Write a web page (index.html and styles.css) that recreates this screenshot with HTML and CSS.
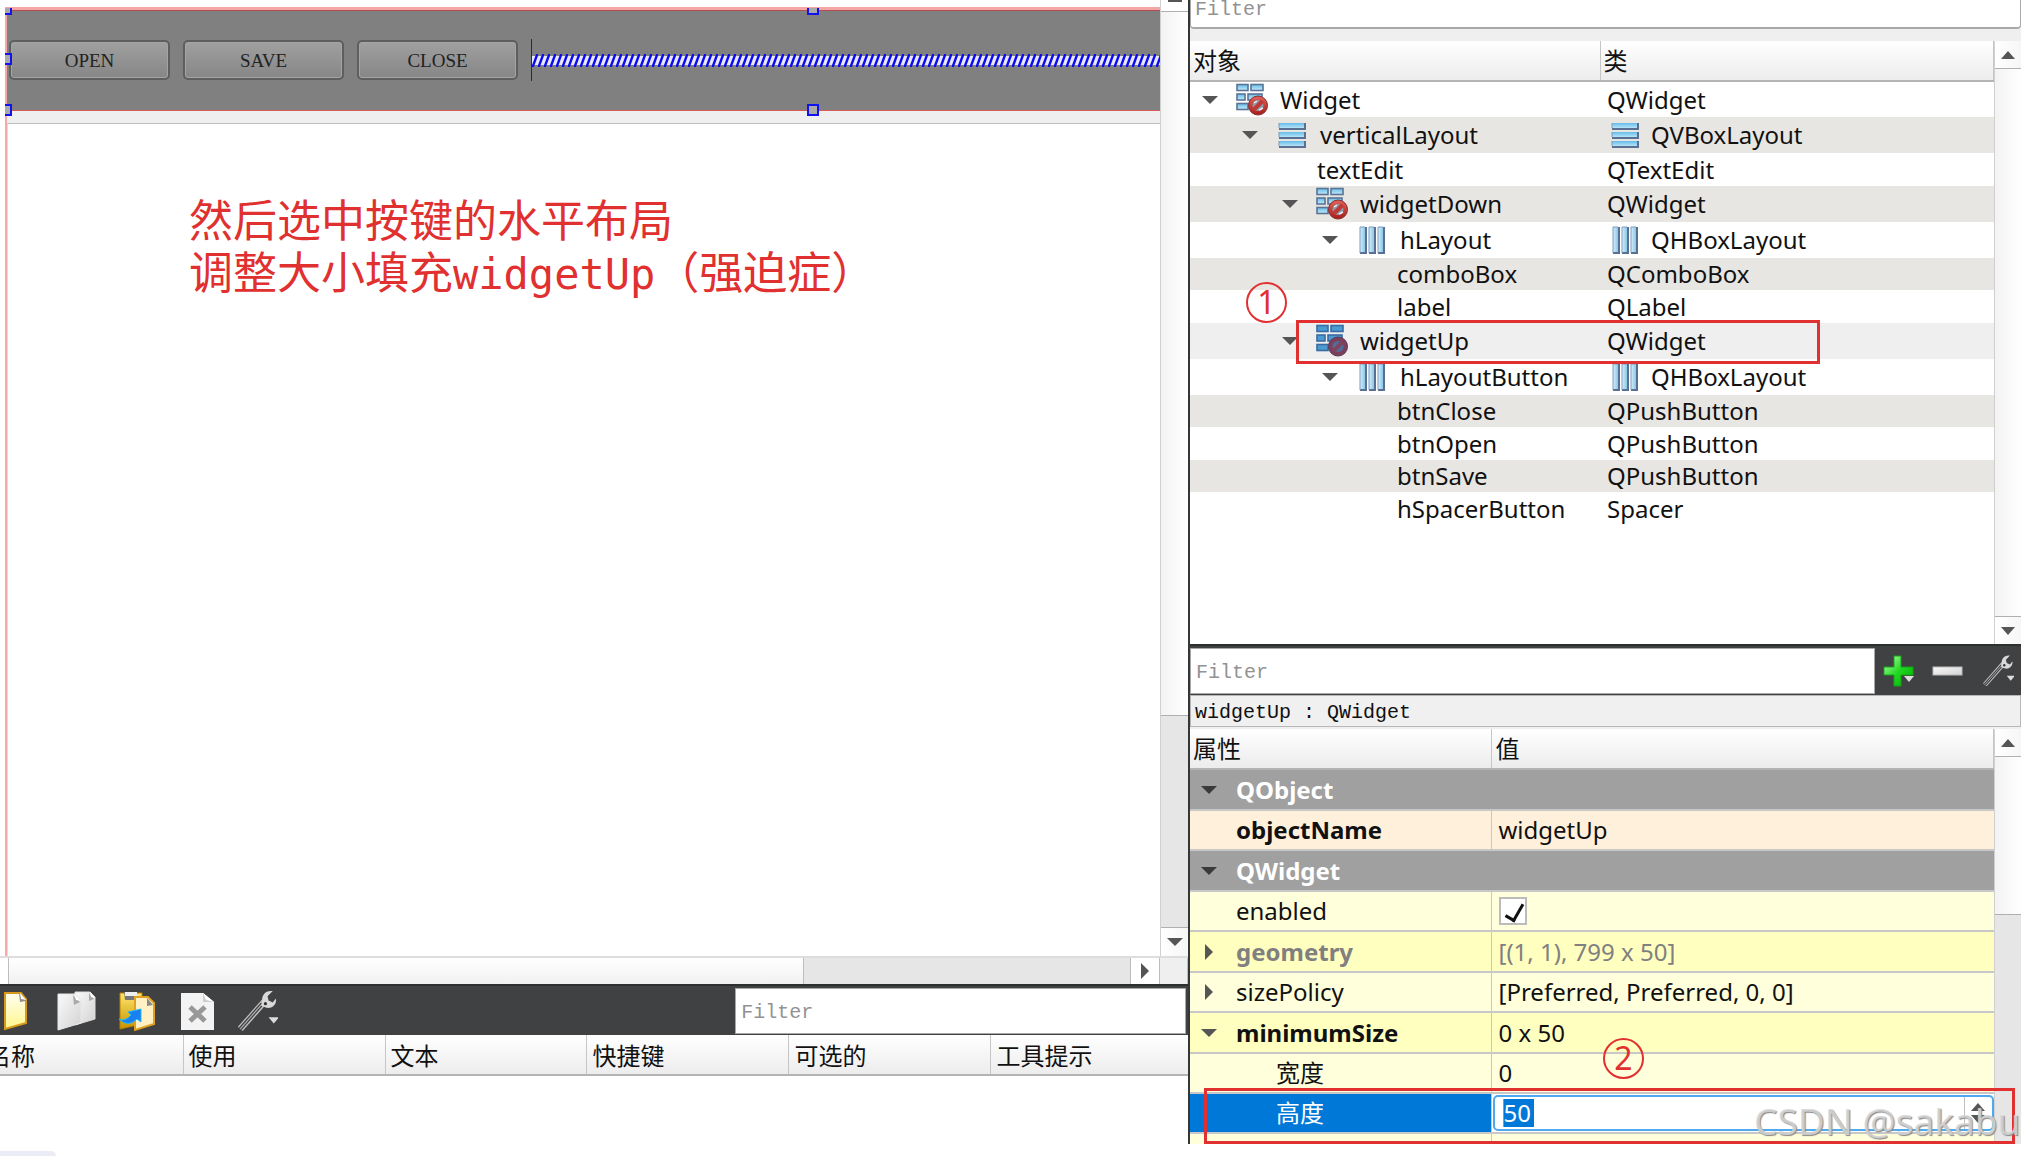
FILE: index.html
```html
<!DOCTYPE html>
<html lang="zh-CN">
<head>
<meta charset="utf-8">
<title>Qt Designer</title>
<link rel="stylesheet" href="styles.css">
</head>
<body>
<svg class="defs" width="0" height="0" aria-hidden="true">
  <defs>
    <linearGradient id="gBlue" x1="0" y1="0" x2="0" y2="1"><stop offset="0" stop-color="#63bbe8"/><stop offset="1" stop-color="#c9ecfb"/></linearGradient>
    <linearGradient id="gBar" x1="0" y1="0" x2="1" y2="0"><stop offset="0" stop-color="#d5effb"/><stop offset="1" stop-color="#7cc0e2"/></linearGradient>
    <linearGradient id="gRed" x1="0" y1="0" x2="0" y2="1"><stop offset="0" stop-color="#e0655c"/><stop offset="1" stop-color="#a81c18"/></linearGradient>
    <linearGradient id="gGreen" x1="0" y1="0" x2="1" y2="1"><stop offset="0" stop-color="#c8ffc0"/><stop offset=".5" stop-color="#22d822"/><stop offset="1" stop-color="#00a800"/></linearGradient>
    <linearGradient id="gPage" x1="0" y1="0" x2="0" y2="1"><stop offset="0" stop-color="#fffdf0"/><stop offset="1" stop-color="#fff78c"/></linearGradient>
    <linearGradient id="gGray" x1="0" y1="0" x2="1" y2="1"><stop offset="0" stop-color="#fafafa"/><stop offset="1" stop-color="#d2d2d2"/></linearGradient>
    <linearGradient id="gGold" x1="0" y1="0" x2="0" y2="1"><stop offset="0" stop-color="#ffe66a"/><stop offset="1" stop-color="#c79300"/></linearGradient>
    <pattern id="spring" width="6" height="13" patternUnits="userSpaceOnUse">
      <rect width="6" height="13" fill="#808080"/>
      <rect y="2" width="6" height="9" fill="#e8e8ff"/>
      <path d="M-1 12 H1 L5 1 H7" fill="none" stroke="#0b0bf0" stroke-width="2.400"/>
    </pattern>
    <symbol id="i-widget" viewBox="0 0 34 34">
      <g fill="url(#gBlue)" stroke="#5b7496" stroke-width="1.6">
        <rect x="3" y="1.500" width="11" height="6"/><rect x="17" y="1.500" width="12" height="6"/>
        <rect x="3" y="11" width="8" height="6"/><rect x="14" y="11" width="14" height="6"/>
        <rect x="3" y="20.500" width="11" height="6"/>
      </g>
      <circle cx="24" cy="22.500" r="9.500" fill="url(#gRed)" stroke="#8c2a2a"/>
      <circle cx="24" cy="22.500" r="5.500" fill="#8e99a8"/>
      <path d="M19.500 27 L28.500 18" stroke="#c03a34" stroke-width="4"/>
      <path d="M20 20l3-2M25 27l4-2" stroke="#e8eef4" stroke-width="1.500"/>
    </symbol>
    <symbol id="i-widget-sel" viewBox="0 0 34 34">
      <g fill="#4a9bd2" stroke="#3a6ba3" stroke-width="1.6">
        <rect x="3" y="1.500" width="11" height="6"/><rect x="17" y="1.500" width="12" height="6"/>
        <rect x="3" y="11" width="8" height="6"/><rect x="14" y="11" width="14" height="6"/>
        <rect x="3" y="20.500" width="11" height="6"/>
      </g>
      <circle cx="24" cy="22.500" r="9.500" fill="#7c3f5c" stroke="#5c3558"/>
      <circle cx="24" cy="22.500" r="5.500" fill="#4c6f9d"/>
      <path d="M19.500 27 L28.500 18" stroke="#84435c" stroke-width="4"/>
    </symbol>
    <symbol id="i-vbox" viewBox="0 0 34 34">
      <g fill="url(#gBlue)"><rect x="5" y="5" width="26" height="6"/><rect x="5" y="14" width="26" height="6"/><rect x="5" y="23" width="26" height="6"/></g>
      <path d="M5 11h26V5M5 20h26v-6M5 29h26v-6" fill="none" stroke="#5b6f92" stroke-width="2"/>
      <path d="M5 10V5M5 19v-5M5 28v-5" stroke="#7f9cbc"/>
    </symbol>
    <symbol id="i-hbox" viewBox="0 0 34 34">
      <g fill="url(#gBar)"><rect x="6" y="4" width="6" height="26"/><rect x="15" y="4" width="6" height="26"/><rect x="24" y="4" width="6" height="26"/></g>
      <path d="M6 30h6V4M15 30h6V4M24 30h6V4" fill="none" stroke="#5b6f92" stroke-width="2"/>
      <path d="M6 30V4h5M15 30V4h5M24 30V4h5" fill="none" stroke="#7f9cbc"/>
    </symbol>
    <symbol id="i-wrench" viewBox="0 0 42 42">
      <path d="M6 38 L29 12" stroke="#c4c4c4" stroke-width="6"/>
      <path d="M6 38 L27 14" stroke="#404142" stroke-width="3.500"/>
      <path d="M6 38 L27 14" stroke="#b8b8b8" stroke-width="1"/>
      <path d="M37 2 C30 1 26 6 27 12 L26 16 L31 18 C37 19 41 14 40 9 L37 13 L33 11 L32 7 Z" fill="#d9d9d9"/>
      <circle cx="30" cy="14" r="1.500" fill="#333"/>
      <path d="M33 27h10l-5 6z" fill="#ddd"/>
    </symbol>
  </defs>
</svg>

<main class="designer">
  <section class="editor">
    <div class="form-area">
      <div class="canvas">
        <div class="form">
          <div class="widget-up">
            <button type="button" class="push">OPEN</button>
            <button type="button" class="push">SAVE</button>
            <button type="button" class="push">CLOSE</button>
            <div class="spacer"><svg width="100%" height="13" aria-hidden="true"><rect width="100%" height="13" fill="url(#spring)"/></svg></div>
            <i class="grip g-tl"></i><i class="grip g-ml"></i><i class="grip g-bl"></i>
            <i class="grip g-tc"></i><i class="grip g-bc"></i>
          </div>
          <div class="text-edit">
            <p class="note">然后选中按键的水平布局<br>调整大小填充<span class="mono">widgetUp</span>（强迫症）</p>
          </div>
        </div>
      </div>
      <div class="vscroll main-scroll">
        <span class="cap-top"></span>
        <span class="thumb"></span>
        <span class="trough"></span>
        <span class="arrow-box"><i class="tri down"></i></span>
      </div>
    </div>
    <div class="hscroll">
      <span class="h-start"></span><span class="h-thumb"></span><span class="h-trough"></span>
      <span class="h-arrow"><i class="tri right"></i></span><span class="h-corner"></span>
    </div>
    <div class="toolbar">
      <div class="tools">
        <button type="button" class="tool" aria-label="新建"><svg width="38" height="42" viewBox="0 0 38 42"><path d="M5 3H21L26 9V33L5 39Z" fill="url(#gPage)" stroke="#d99a1b" stroke-width="2"/><path d="M19 3l1 9 6-1z" fill="#8f8f8f"/><path d="M20 3l6 7-5-1z" fill="#fff"/></svg></button>
        <button type="button" class="tool" aria-label="复制"><svg width="40" height="42" viewBox="0 0 40 42"><path d="M19 2H34L39 7V29L19 35Z" fill="url(#gGray)" stroke="#ddd"/><path d="M2 4H19L25 10V33L2 40Z" fill="url(#gGray)" stroke="#e8e8e8"/><path d="M17 5l1 10 6-3zM33 3l0 8 5-2z" fill="#aaa"/><path d="M18 4l7 7-5-1zM34 2l5 6-4-1z" fill="#fff"/></svg></button>
        <button type="button" class="tool" aria-label="粘贴"><svg width="46" height="42" viewBox="0 0 46 42"><path d="M6 3H28V34L6 39Z" fill="url(#gGold)" stroke="#b98000"/><path d="M10 2h13l-2 8H11z" fill="#777"/><path d="M11 2h12v4H11z" fill="#eee"/><path d="M21 7H34L40 13V34L21 40Z" fill="#fff1c4" stroke="#e0a020" stroke-width="2"/><path d="M33 8l0 8 6-1z" fill="#888"/><path d="M5 29q6 3 12-4l-3-3 13-3v13l-4-3q-9 9-18 0z" fill="#1880f0" stroke="#2bb8f0"/></svg></button>
        <button type="button" class="tool" aria-label="删除"><svg width="38" height="42" viewBox="0 0 38 42"><path d="M3 3H25L36 12V40H3Z" fill="#f3f3f3"/><path d="M25 3v9h11z" fill="#ccc"/><path d="M25 3l11 9-8-2z" fill="#fff"/><path d="M12 17l15 14M27 17L12 31" stroke="#989898" stroke-width="5"/></svg></button>
        <button type="button" class="tool" aria-label="配置"><svg width="44" height="44"><use href="#i-wrench"/></svg></button>
      </div>
      <input class="filter action-filter" type="text" placeholder="Filter" aria-label="Filter actions">
    </div>
    <table class="actions">
      <thead><tr><th class="cut">名称</th><th>使用</th><th>文本</th><th>快捷键</th><th>可选的</th><th class="last">工具提示</th></tr></thead>
    </table>
    <div class="actions-body"><span class="hint"></span></div>
  </section>

  <aside class="side">
    <section class="inspector">
      <input class="filter top-filter" type="text" placeholder="Filter" aria-label="Filter objects">
      <div class="scroll-row">
        <div class="table-box">
          <table class="tree">
            <thead><tr><th class="c-object">对象</th><th>类</th></tr></thead>
            <tbody>
              <tr class="tall"><td class="l0"><div class="cell"><i class="tri down"></i><svg class="ico"><use href="#i-widget"/></svg>Widget</div></td><td>QWidget</td></tr>
              <tr class="tall alt"><td class="l1"><div class="cell"><i class="tri down"></i><svg class="ico"><use href="#i-vbox"/></svg>verticalLayout</div></td><td><div class="cell"><svg class="ico"><use href="#i-vbox"/></svg>QVBoxLayout</div></td></tr>
              <tr><td class="l2 leaf">textEdit</td><td>QTextEdit</td></tr>
              <tr class="tall alt"><td class="l2"><div class="cell"><i class="tri down"></i><svg class="ico"><use href="#i-widget"/></svg>widgetDown</div></td><td>QWidget</td></tr>
              <tr class="tall"><td class="l3"><div class="cell"><i class="tri down"></i><svg class="ico"><use href="#i-hbox"/></svg>hLayout</div></td><td><div class="cell"><svg class="ico"><use href="#i-hbox"/></svg>QHBoxLayout</div></td></tr>
              <tr class="alt"><td class="l4 leaf">comboBox</td><td>QComboBox</td></tr>
              <tr><td class="l4 leaf">label</td><td>QLabel</td></tr>
              <tr class="tall current"><td class="l2"><div class="cell"><i class="tri down"></i><svg class="ico"><use href="#i-widget-sel"/></svg>widgetUp</div></td><td>QWidget</td></tr>
              <tr class="tall"><td class="l3"><div class="cell"><i class="tri down"></i><svg class="ico"><use href="#i-hbox"/></svg>hLayoutButton</div></td><td><div class="cell"><svg class="ico"><use href="#i-hbox"/></svg>QHBoxLayout</div></td></tr>
              <tr class="alt"><td class="l4 leaf">btnClose</td><td>QPushButton</td></tr>
              <tr><td class="l4 leaf">btnOpen</td><td>QPushButton</td></tr>
              <tr class="alt"><td class="l4 leaf">btnSave</td><td>QPushButton</td></tr>
              <tr><td class="l4 leaf">hSpacerButton</td><td>Spacer</td></tr>
            </tbody>
          </table>
          <span class="mark mark-one"></span>
          <span class="badge badge-one">1</span>
        </div>
        <div class="vscroll side-scroll">
          <span class="arrow-box"><i class="tri up small"></i></span>
          <span class="thumb"></span>
          <span class="arrow-box"><i class="tri down small"></i></span>
        </div>
      </div>
    </section>

    <section class="properties">
      <div class="prop-bar">
        <input class="filter prop-filter" type="text" placeholder="Filter" aria-label="Filter properties">
        <div class="prop-tools">
          <button type="button" class="tool" aria-label="添加"><svg width="34" height="34" viewBox="0 0 34 34"><path d="M12 2h7v11h12v8H19v11h-7V21H2v-8h10z" fill="url(#gGreen)" stroke="#13a513"/><path d="M22 22h10l-5 6z" fill="#ddd"/></svg></button>
          <button type="button" class="tool" aria-label="移除"><svg width="34" height="34" viewBox="0 0 34 34"><rect x="2" y="13" width="29" height="8" fill="url(#gGray)" stroke="#bbb"/></svg></button>
          <button type="button" class="tool" aria-label="配置"><svg width="34" height="36"><use href="#i-wrench"/></svg></button>
        </div>
      </div>
      <div class="prop-title">widgetUp : QWidget</div>
      <div class="scroll-row">
        <div class="table-box">
          <table class="props">
            <thead><tr><th class="c-prop">属性</th><th>值</th></tr></thead>
            <tbody>
              <tr class="group"><td colspan="2"><div class="cell"><i class="tri down"></i><b>QObject</b></div></td></tr>
              <tr class="peach"><td class="name"><b>objectName</b></td><td>widgetUp</td></tr>
              <tr class="group"><td colspan="2"><div class="cell"><i class="tri down"></i><b>QWidget</b></div></td></tr>
              <tr class="pale"><td class="name"><label for="enabled">enabled</label></td><td><input id="enabled" class="check" type="checkbox" checked></td></tr>
              <tr class="deep dim"><td><div class="cell"><i class="tri right"></i><b>geometry</b></div></td><td>[(1, 1), 799 x 50]</td></tr>
              <tr class="pale"><td><div class="cell"><i class="tri right"></i>sizePolicy</div></td><td>[Preferred, Preferred, 0, 0]</td></tr>
              <tr class="deep"><td><div class="cell"><i class="tri down"></i><b>minimumSize</b></div></td><td>0 x 50</td></tr>
              <tr class="pale"><td class="name sub">宽度</td><td>0</td></tr>
              <tr class="editing"><td class="name sub"><label for="minh">高度</label></td><td class="spin-cell"><div class="spin"><input id="minh" class="spin-input" type="text" value="50"><span class="steps"><i class="tri up small"></i><i class="tri down small"></i></span></div></td></tr>
              <tr class="pale"><td></td><td></td></tr>
            </tbody>
          </table>
          <span class="badge badge-two">2</span>
        </div>
        <div class="vscroll prop-scroll">
          <span class="arrow-box"><i class="tri up small"></i></span>
          <span class="thumb"></span>
          <span class="trough"></span>
        </div>
      </div>
      <span class="mark mark-two"></span>
    </section>
    <div class="watermark">CSDN @sakabu</div>
  </aside>
</main>
</body>
</html>
```
FILE: styles.css
```css
* { box-sizing: border-box; }
body {
  margin: 0;
  background: #fff;
  color: #111;
  font: 24px/32px "Noto Sans", "Noto Sans CJK SC", sans-serif;
  overflow: hidden;
}
.defs { position: absolute; }
input, button { font: inherit; margin: 0; }
table { border-collapse: collapse; table-layout: fixed; width: 100%; }
td, th { padding: 0; text-align: left; font-weight: 400; white-space: nowrap; }

.designer {
  display: grid;
  grid-template-columns: minmax(0, 1188fr) minmax(0, 833fr);
  height: 100vh;
  padding-right: 11px;
}

/* triangles */
.tri { display: inline-block; flex: none; width: 0; height: 0; border: 8px solid transparent; }
.tri.down { border-top-color: #555; border-bottom-width: 0; }
.tri.up { border-bottom-color: #555; border-top-width: 0; }
.tri.right { border-left-color: #555; border-right-width: 0; }
.tri.small { border-left-width: 7px; border-right-width: 7px; }

/* form editor */
.editor { display: flex; flex-direction: column; min-width: 0; }
.form-area { display: flex; flex: 1; min-height: 0; }
.canvas { flex: 1; min-width: 0; padding: 7px 0 0 5px; display: flex; background: #fff; }
.form {
  flex: 1;
  min-width: 0;
  display: flex;
  flex-direction: column;
  gap: 12px;
  background: #efefef;
  border-left: 2px solid #f6a9a9;
}
.widget-up {
  position: relative;
  display: flex;
  align-items: center;
  gap: 13px;
  height: 104px;
  padding-left: 2px;
  background: #808080;
  border-top: 3px solid #f4a6a6;
  border-bottom: 1px solid #d85c5c;
  box-shadow: inset 0 1px #b05050;
}
.push {
  width: 161px;
  height: 40px;
  padding: 2px 0 0;
  border: 2px solid #5e5e5e;
  border-radius: 5px;
  background: linear-gradient(#a0a0a0, #868686);
  box-shadow: inset 0 0 0 1px #a4a4a4;
  color: #222;
  font: 19px/32px "Liberation Serif", serif;
}
.spacer {
  flex: 1;
  min-width: 0;
  height: 42px;
  display: flex;
  align-items: center;
  border-left: 1px solid #1414e0;
}
.grip { position: absolute; width: 12px; height: 12px; border: 2px solid #1212f0; background: #a9a9a9; }
.g-tl, .g-ml, .g-bl { left: -2px; width: 7px; border-left: 0; }
.g-tl, .g-tc { top: -2px; height: 7px; border-top: 0; }
.g-ml { top: 43px; }
.g-bl, .g-bc { bottom: -6px; }
.g-tc, .g-bc { left: 800px; }
.text-edit { flex: 1; border-top: 1px solid #bdbdbd; border-left: 1px solid #ddd; background: #fff; }
.note {
  margin: 68px 0 0 181px;
  color: #e03030;
  font: 44px/52px "Noto Sans CJK SC", sans-serif;
  white-space: nowrap;
}
.mono { font: 42px/52px "DejaVu Sans Mono", monospace; }

/* scroll bars */
.vscroll { display: flex; flex-direction: column; flex: none; width: 28px; border-left: 1px solid #d0d0d0; }
.thumb { background: linear-gradient(90deg, #f3f3f3, #fff); }
.trough { background: #e6e6e6; }
.arrow-box { display: flex; align-items: center; justify-content: center; height: 28px; flex: none; background: linear-gradient(90deg, #fff, #f6f6f6); }
.cap-top { height: 12px; border-bottom: 1px solid #b0b0b0; background: #fff linear-gradient(#555, #555) center top / 14px 2px no-repeat; }
.main-scroll .thumb { flex: 705; border-bottom: 1px solid #b0b0b0; }
.main-scroll .trough { flex: 211; border-bottom: 1px solid #b0b0b0; }
.hscroll { display: flex; height: 28px; border-top: 2px solid #ddd; background: #fff; }
.hscroll span { border-right: 1px solid #bdbdbd; }
.h-start { width: 9px; }
.h-thumb { flex: 795; background: linear-gradient(#fff, #f1f1f1); }
.h-trough { flex: 327; background: #e6e6e6; }
.h-arrow { width: 29px; display: flex; align-items: center; justify-content: center; }
.h-corner { width: 28px; background: #efefef; }

/* action editor */
.toolbar { display: flex; align-items: center; justify-content: space-between; height: 51px; padding-right: 2px; background: #404142; border-top: 2px solid #2e3030; }
.tools { display: flex; align-items: center; gap: 18px; }
.tool { display: flex; padding: 0; border: 0; background: none; flex: none; }
.filter {
  display: block;
  min-width: 0;
  border: 1px solid #a8a8a8;
  background: #fff;
  padding: 4px 5px 0;
  font: 20px/24px "Liberation Mono", monospace;
  outline: 0;
}
.filter::placeholder { color: #929292; opacity: 1; }
.action-filter { width: 38%; height: 46px; }
th { background: linear-gradient(#fff, #ececec); border-right: 1px solid #c6c6c6; border-bottom: 2px solid #b4b4b4; }
.actions { flex: none; }
.actions th { height: 40px; padding: 2px 0 0 5px; width: 17%; }
.actions .cut { width: 183px; padding-left: 0; text-indent: -13px; overflow: hidden; }
.actions .last { width: 197px; border-right: 0; }
.actions-body { height: 80px; display: flex; align-items: flex-end; }
.hint { width: 56px; height: 5px; border-radius: 0 8px 0 0; background: #ececf6; }

/* right-hand docks */
.side { position: relative; display: flex; flex-direction: column; min-width: 0; min-height: 0; margin-bottom: 12px; border-left: 2px solid #343637; background: #efefef; }
.scroll-row { display: flex; flex: 1; min-height: 0; }
.table-box { position: relative; flex: 1; min-width: 0; background: #fff; }
.inspector { display: flex; flex-direction: column; flex: 644 1 0; min-height: 0; }
.top-filter { width: 100%; height: 29px; margin-bottom: 12px; padding: 0 4px 8px; border-top: 0; border-radius: 0 0 4px 4px; border-bottom-width: 2px; }
.cell { display: flex; align-items: center; }
.tree th { height: 40px; padding-left: 3px; }
.tree .c-object { width: 410px; }
.tree td { height: 33px; padding-left: 7px; line-height: 30px; }
.tree .alt td { height: 32px; }
.tree .tall td { height: 36px; }
.tree .alt { background: #e8e6e2; }
.tree .current { background: #efefef; }
.tree .tri { margin-right: 16px; }
.ico { width: 34px; height: 34px; margin-right: 12px; flex: none; }
.tree td + td .ico { margin-right: 10px; }
.tree .l0 { padding-left: 12px; }
.tree .l1 { padding-left: 52px; }
.tree .l2 { padding-left: 92px; }
.tree .l3 { padding-left: 132px; }
.tree .l2.leaf { padding-left: 127px; }
.tree .l4.leaf { padding-left: 207px; }
.side-scroll, .prop-scroll { width: 27px; }
.side-scroll .arrow-box, .prop-scroll .arrow-box { height: 27px; }
.side-scroll .thumb { flex: 1; border: solid #b0b0b0; border-width: 1px 0; }
.prop-scroll .thumb { flex: 158; border: solid #b0b0b0; border-width: 1px 0; }
.prop-scroll .trough { flex: 230; }

.properties { position: relative; display: flex; flex-direction: column; flex: 500 1 0; min-height: 0; overflow: hidden; }
.prop-bar { display: flex; align-items: center; height: 51px; flex: none; background: #404142; border-top: 2px solid #2e3030; }
.prop-tools { display: flex; align-items: center; gap: 15px; padding: 0 7px; }
.prop-filter { flex: 1; height: 46px; }
.prop-title { height: 32px; margin-bottom: 2px; padding: 2px 0 0 4px; border: 1px solid #b8b8b8; background: #f0f0f0; font: 20px/30px "Liberation Mono", monospace; flex: none; }
.properties .table-box { overflow: hidden; }
.props th { height: 40px; padding-left: 4px; }
.props .c-prop { width: 301px; padding-left: 3px; }
.props td { height: 40px; padding-left: 7px; border-bottom: 2px solid #c8c8c8; }
.props td:first-child:not([colspan]) { border-right: 1px solid #c8c8c8; }
.props td:first-child { padding-left: 11px; }
.props .name:first-child { padding-left: 46px; }
.props .sub:first-child { padding-left: 86px; }
.props .cell .tri.down { margin-right: 19px; }
.props .cell .tri.right { margin: 0 23px 0 4px; }
.group { background: #a0a0a0; color: #fff; }
.props .group td, .props .deep td { height: 41px; }
.props .group .tri { border-top-color: #3a3a3a; }
.peach { background: #fff0dc; }
.pale { background: #ffffdc; }
.deep { background: #ffffbf; }
.dim { color: #808080; }
b { font-weight: 700; }
.check { appearance: none; display: block; width: 28px; height: 28px; border: 2px solid #bcbcbc; background: #fff; position: relative; }
.check::after { content: ""; position: absolute; left: 8px; top: 2px; width: 8px; height: 17px; border: solid #111; border-width: 0 3px 3px 0; transform: rotate(30deg); }
.editing td:first-child { background: #0078d7; color: #fff; }
.props .spin-cell { padding: 0 0 0 1px; background: #fff; }
.spin { display: flex; height: 36px; padding-left: 8px; border: 2px solid #4fa9ee; border-radius: 5px; background: #fff; justify-content: space-between; align-items: center; }
.spin-input { width: 31px; height: 28px; padding: 0; border: 0; border-left: 1px solid #f08030; background: #0078d7; color: #fff; outline: 0; }
.steps { display: flex; flex-direction: column; justify-content: center; align-items: center; gap: 4px; width: 28px; height: 32px; border-left: 1px solid #c0c0c0; }

/* annotations */
.mark { position: absolute; border: 3px solid #e03030; }
.mark-one { left: 106px; top: 279px; width: 524px; height: 44px; }
.mark-two { left: 14px; right: 6px; bottom: 0; height: 56px; }
.badge { position: absolute; width: 41px; height: 41px; border: 2px solid #e03030; border-radius: 50%; color: #e03030; text-align: center; font: 32px/36px "Noto Sans", sans-serif; }
.badge-one { left: 56px; top: 241px; }
.badge-two { left: 413px; top: 309px; }
.watermark {
  position: absolute;
  left: 564px;
  right: -11px;
  bottom: 0;
  overflow: hidden;
  white-space: nowrap;
  color: rgba(215, 215, 215, .85);
  text-shadow: 1px 1px 1px #888;
  font: 37px/46px "Noto Sans", sans-serif;
}
```
